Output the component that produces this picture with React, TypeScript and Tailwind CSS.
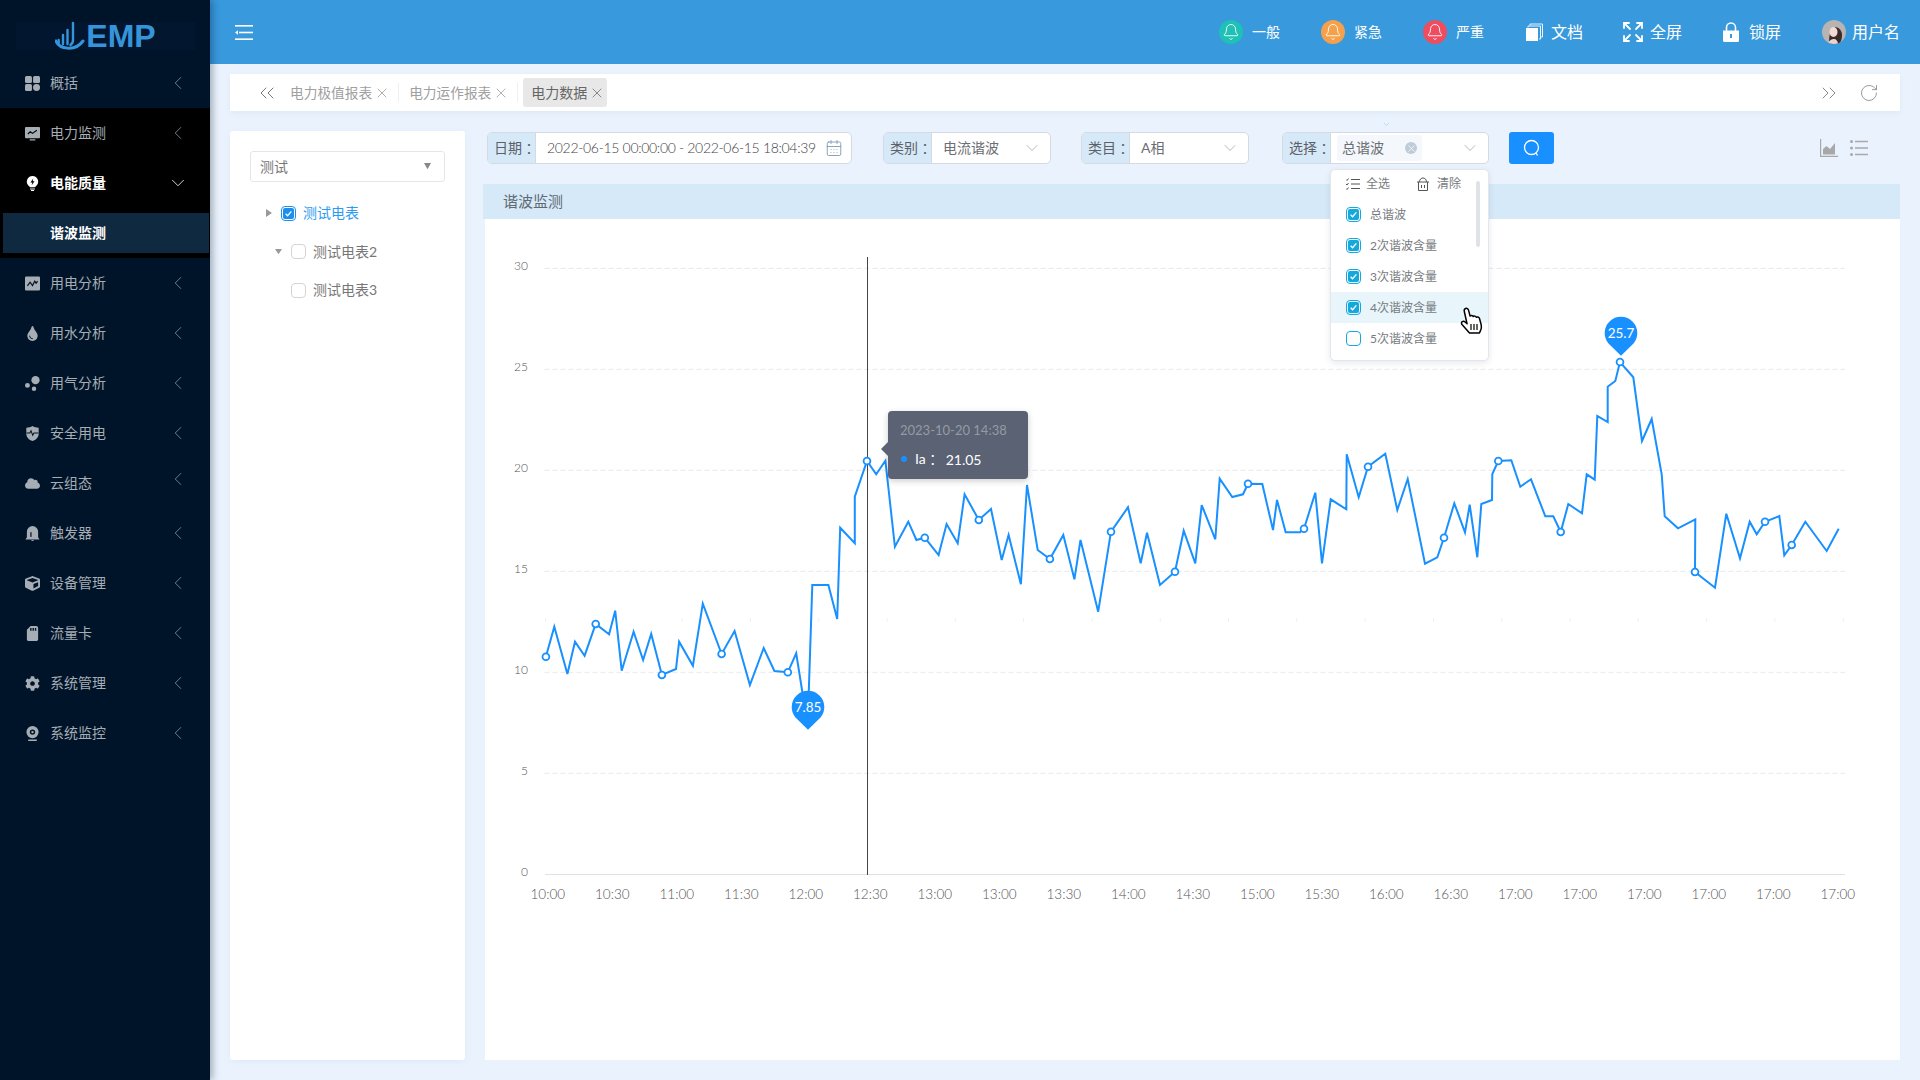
import { Bell, CalendarDays, ChevronDown, ChevronLeft, ChevronsLeft, ChevronsRight, Expand, RotateCw, X } from "lucide-react";
import { FaCloud, FaCog, FaCube, FaSdCard, FaTint } from "react-icons/fa";

const ICON_GRID = (
  <svg viewBox="0 0 16 16" className="size-[15px]" fill="currentColor">
    <rect x="0" y="0" width="7.4" height="7.4" rx="1.6" />
    <rect x="8.6" y="0" width="7.4" height="7.4" rx="1.6" />
    <rect x="0" y="8.6" width="7.4" height="7.4" rx="1.6" />
    <rect x="8.6" y="8.6" width="7.4" height="7.4" rx="3.7" />
  </svg>
);

const ICON_MONITOR = (
  <svg viewBox="0 0 16 16" className="size-[15px]" fill="currentColor">
    <path d="M1 1h14a1 1 0 0 1 1 1v10a1 1 0 0 1-1 1H1a1 1 0 0 1-1-1V2a1 1 0 0 1 1-1zM5 14.2h6V15.4H5z" />
    <path d="M3 8.5l2.6-2.4 2.4 1.8L12.6 4.6" fill="none" stroke="#000" strokeWidth="1.2" />
  </svg>
);

const ICON_BULB = (
  <svg viewBox="0 0 16 16" className="size-[15px]" fill="currentColor">
    <path d="M8 0a6 6 0 0 1 3.6 10.8c-.5.4-.7.8-.8 1.2H5.2c-.1-.4-.3-.8-.8-1.2A6 6 0 0 1 8 0zM5.4 13.2h5.2v1.1H5.4zM6.4 15h3.2v1H6.4z" />
    <path d="M8.8 2.6L5.8 6.9h2l-.7 3 3.1-4.3h-2z" fill="#000" />
  </svg>
);

const ICON_CHART = (
  <svg viewBox="0 0 16 16" className="size-[15px]" fill="currentColor">
    <rect x="0" y="0.5" width="16" height="15" rx="1.2" />
    <path d="M2.6 10.6l2.8-4 2.6 3.6 2.4-4.6 1.4 2 1.6-2" fill="none" stroke="#001429" strokeWidth="1.3" />
  </svg>
);

const ICON_BUBBLES = (
  <svg viewBox="0 0 16 16" className="size-[15px]" fill="currentColor">
    <circle cx="11.2" cy="4.4" r="4.4" />
    <circle cx="2.6" cy="10" r="2.6" />
    <circle cx="9.6" cy="13.6" r="2.4" />
  </svg>
);

const ICON_SHIELD = (
  <svg viewBox="0 0 16 16" className="size-[15px]" fill="currentColor">
    <path d="M8 0c1.8 1 4 1.6 6.6 1.8v6.4C14.6 12 11.8 14.8 8 16c-3.8-1.2-6.6-4-6.6-7.8V1.800C4 1.600 6.200 1 8 0z" />
    <path d="M1.600 7.400h3.600l1.200-2.400 1.800 4.800 1.400-2.400h4.800" fill="none" stroke="#001429" strokeWidth="1.1" />
  </svg>
);

const ICON_ALARM = (
  <svg viewBox="0 0 16 16" className="size-[15px]" fill="currentColor">
    <path d="M8 0a6 6 0 0 1 6 6v6l1.500 2.400H.5L2 12V6a6 6 0 0 1 6-6zM6.500 15h3c0 .6-.7 1-1.500 1s-1.500-.4-1.500-1z" />
    <rect x="5.700" y="6.600" width="1.300" height="5" fill="#001429" />
  </svg>
);

const ICON_CAM = (
  <svg viewBox="0 0 16 16" className="size-[15px]" fill="currentColor">
    <path
      fillRule="evenodd"
      d="M8 0a6.500 6.500 0 1 1 0 13A6.500 6.500 0 0 1 8 0zm0 3.600a2.900 2.900 0 1 0 0 5.800 2.900 2.900 0 0 0 0-5.800z"
    />
    <circle cx="8" cy="6.500" r="1.300" />
    <path d="M3.400 14.400h9.200V16H3.400z" />
  </svg>
);

const MENU = [
  { label: "概括", icon: ICON_GRID },
  { label: "电力监测", icon: ICON_MONITOR, dark: true },
  { label: "电能质量", icon: ICON_BULB, dark: true, open: true },
  { label: "用电分析", icon: ICON_CHART },
  { label: "用水分析", icon: <FaTint size={15} /> },
  { label: "用气分析", icon: ICON_BUBBLES },
  { label: "安全用电", icon: ICON_SHIELD },
  { label: "云组态", icon: <FaCloud size={15} />, arrow: "-translate-y-1" },
  { label: "触发器", icon: ICON_ALARM },
  { label: "设备管理", icon: <FaCube size={15} /> },
  { label: "流量卡", icon: <FaSdCard size={15} /> },
  { label: "系统管理", icon: <FaCog size={15} /> },
  { label: "系统监控", icon: ICON_CAM },
];

// traced from the reference, page coordinates; third value = ring marker
const LINE: [number, number, 1?][] = [
  [545.9, 656.7, 1], [554.3, 626.7], [567.4, 674], [575, 641.7], [584.6, 655.7], [595.7, 624, 1], [609.1, 634.3],
  [615.2, 610.7], [621.7, 670.7], [633.6, 631.7], [643.1, 660], [651.2, 634], [661.9, 675, 1], [676, 669],
  [679.1, 641.7], [692.9, 665.7], [702.8, 603.7], [721.6, 654, 1], [734.6, 631], [749.9, 685], [763.7, 648],
  [774.4, 671], [787.8, 672.3, 1], [796.2, 653.3], [802.3, 691.7], [808, 715], [812.3, 585], [828.4, 585],
  [837.2, 619], [840.2, 527.7], [854.8, 543.3], [854.8, 496.7], [867, 461, 1], [876.2, 474.3], [885.4, 460.7],
  [894.9, 546.7], [908.3, 521.7], [916.4, 540], [924.8, 537.7, 1], [938.6, 555], [946.6, 524], [957.7, 543.3],
  [964.6, 494.3], [978.8, 520, 1], [991, 509], [1001.7, 560], [1008.6, 535], [1020.9, 584.3], [1027, 485],
  [1037.7, 550], [1049.9, 559, 1], [1063.3, 535], [1074.4, 579.3], [1080.5, 540], [1098.2, 611.7], [1111, 531.7, 1],
  [1128, 507.3], [1140.7, 563.3], [1147, 532.7], [1160, 585], [1175, 571.7, 1], [1183.7, 530.7], [1195.3, 563.3],
  [1201.7, 505], [1215.3, 539.3], [1219.7, 478.7], [1232.3, 497], [1243, 494.3], [1248, 483.7, 1], [1262.3, 484],
  [1273, 530], [1277, 500], [1285.7, 532.3], [1300, 532.3], [1304, 528.7, 1], [1315.3, 492.7], [1322, 563.3],
  [1330.7, 499.3], [1346.3, 509.3], [1346.7, 454.3], [1358.7, 497.3], [1368, 466.7, 1], [1385.3, 453.7],
  [1397.3, 510], [1407.7, 479], [1425, 563.7], [1437.3, 557.3], [1444, 537.7, 1], [1454.3, 503.3], [1465, 532.3],
  [1469.7, 504.7], [1477.3, 557.3], [1481.3, 504], [1492, 500], [1492.3, 474], [1498.3, 461, 1], [1511.3, 460.3],
  [1520.3, 486.7], [1531, 479.3], [1545.3, 516.3], [1553.3, 516.3], [1560.7, 532, 1], [1568.3, 504], [1582, 513.3],
  [1586.7, 474.3], [1594.7, 479.7], [1597.3, 416], [1607.7, 422], [1607.7, 386.7], [1615.3, 381], [1620, 362, 1],
  [1633.3, 377.3], [1642, 441], [1651.7, 419], [1661.7, 474.3], [1664.7, 516.3], [1678, 528.3], [1695.3, 519.3],
  [1695, 572, 1], [1715, 587.7], [1726.3, 513.7], [1740, 558.3], [1749.7, 521.7], [1756.7, 534.3], [1765, 521.7, 1],
  [1779.3, 516], [1784.3, 555.3], [1791.7, 545, 1], [1805.3, 521.7], [1826.7, 551], [1838.7, 528.7],
];

const X_LABELS = [
  "10:00", "10:30", "11:00", "11:30", "12:00", "12:30", "13:00", "13:00", "13:30", "14:00", "14:30",
  "15:00", "15:30", "16:00", "16:30", "17:00", "17:00", "17:00", "17:00", "17:00", "17:00",
];

function Pin({ cx, top, text }: { cx: number; top: number; text: string }) {
  const cy = top + 16.3;
  return (
    <g>
      <path
        d={`M${cx} ${top + 39} L${cx - 12.5} ${cy + 10.5} A16.3 16.3 0 1 1 ${cx + 12.5} ${cy + 10.5} Z`}
        fill="#1890ff"
      />
      <text x={cx} y={cy + 4.5} textAnchor="middle" fontSize="13.5" fontWeight="400" fill="#fff">
        {text}
      </text>
    </g>
  );
}

function Chart() {
  return (
    <svg viewBox="485 219 1415 841" className="block h-[841px] w-[1415px] font-light">
      {[0, 5, 10, 15, 20, 25, 30].map((v) => {
        const y = 874.3 - v * 20.2;
        return (
          <g key={v}>
            {v > 0 && <line x1="544.4" x2="1845" y1={y} y2={y} stroke="#e8e8e8" strokeDasharray="5 3" />}
            <text x="528" y={y + 1.5} textAnchor="end" fontSize="12" fill="#555">
              {v}
            </text>
          </g>
        );
      })}
      {Array.from({ length: 20 }, (_, i) => (
        <line key={i} x1={545.5 + i * 68.3} x2={545.5 + i * 68.3} y1="618" y2="622" stroke="#f0f0f0" />
      ))}
      <line x1="545" x2="1845" y1="874.5" y2="874.5" stroke="#e2e2e2" />
      {X_LABELS.map((t, i) => (
        <text key={i} x={547.8 + i * 64.5} y="899" textAnchor="middle" fontSize="13.5" fill="#555">
          {t}
        </text>
      ))}
      <line x1="867.5" x2="867.5" y1="257" y2="875" stroke="#444" />
      <polyline
        points={LINE.map((p) => `${p[0]},${p[1]}`).join(" ")}
        fill="none"
        stroke="#1890ff"
        strokeWidth="2"
        strokeLinejoin="miter"
      />
      {LINE.filter((p) => p[2]).map((p) => (
        <circle key={p[0]} cx={p[0]} cy={p[1]} r="3.4" fill="#fff" stroke="#1890ff" strokeWidth="1.8" />
      ))}
      <Pin cx={808} top={690.7} text="7.85" />
      <Pin cx={1621} top={316.7} text="25.7" />
    </svg>
  );
}

function Colon() {
  return <span className="font-['Noto_Sans_CJK_TC']">：</span>;
}

function Field({ label, className, children }: { label: string; className: string; children: React.ReactNode }) {
  return (
    <div className={`flex h-8 overflow-hidden rounded-[5px] border border-[#d5dae0] bg-white ${className}`}>
      <div className="flex w-[48px] shrink-0 items-center border-r border-[#d5dae0] bg-[#d6e9f8] pl-[6px] whitespace-nowrap text-[#5d6066]">
        {label}
        <Colon />
      </div>
      {children}
    </div>
  );
}

function Check({ on, color }: { on?: boolean; color: "blue" | "cyan" }) {
  const border = color === "blue" ? "border-[#1b8fee]" : "border-[#14a9dc]";
  const fill = color === "blue" ? "bg-[#1b8fee]" : "bg-[#14a9dc]";
  return (
    <span className={`flex size-[15px] shrink-0 rounded-[4px] border p-px ${border}`}>
      {on && (
        <span className={`flex flex-1 items-center justify-center rounded-[2px] ${fill}`}>
          <svg viewBox="0 0 10 10" className="size-[9px]" fill="none" stroke="#fff" strokeWidth="1.5">
            <path d="M1.800 5.200l2.200 2.200 4.200-4.800" />
          </svg>
        </span>
      )}
    </span>
  );
}

function TopItem({ icon, label, className }: { icon: React.ReactNode; label: string; className?: string }) {
  return (
    <div className={`flex items-center text-white ${className ?? ""}`}>
      {icon}
      <span>{label}</span>
    </div>
  );
}

function AlarmBell({ color }: { color: string }) {
  return (
    <span className={`mr-[9px] flex size-6 items-center justify-center rounded-full ${color}`}>
      <Bell size={18} strokeWidth={1.2} />
    </span>
  );
}

function Tab({ label, active, first }: { label: string; active?: boolean; first?: boolean }) {
  return (
    <div
      className={
        active
          ? "ml-[5px] flex h-[29px] w-[84px] items-center rounded-[3px] bg-[#e8e8e8] pl-[8px] text-[#666]"
          : `flex items-center border-r border-[#efefef] pr-[8px] text-[13.7px] text-[#a0a0a0] ${first ? "" : "pl-[10px]"}`
      }
    >
      {label}
      <X size={16} strokeWidth={1} className={active ? "ml-[2px] text-[#555]" : "ml-[2px] text-[#888]"} />
    </div>
  );
}

export default function App() {
  return (
    <div className="flex h-screen w-full overflow-hidden bg-[#eaf3fd] font-[Lato,'Noto_Sans_CJK_SC',sans-serif] text-sm">
      <aside className="relative z-20 flex w-[210px] shrink-0 flex-col bg-[#001429] shadow-[3px_0_7px_rgba(0,21,41,0.3)]">
        <div className="flex h-[58px] shrink-0 justify-center pt-[22px]">
          <div className="flex h-[28px] w-[179px] items-center justify-center bg-[#02172f] pl-px">
            <svg viewBox="0 0 30 30" className="mr-px size-[30px]" fill="none" stroke="#3694da">
              <path d="M3.700 23v-4M8 23v-9M12.500 23V9" strokeWidth="2.400" strokeLinecap="round" />
              <path d="M18 2v17c0 2-1 4-2.500 5" strokeWidth="2.400" strokeLinecap="round" />
              <path d="M1 20c3 8 19 11 27 0" strokeWidth="3" strokeLinecap="round" />
            </svg>
            <span className="font-['Liberation_Sans'] text-[32px] leading-none font-bold text-[#3694da]">EMP</span>
          </div>
        </div>
        {MENU.map((m) => (
          <div key={m.label} className={m.dark ? "bg-black" : ""}>
            <div
              className={`flex h-[50px] items-center pr-[21px] pl-[25px] ${
                m.open ? "font-semibold text-white" : "text-[#a6adb4]"
              }`}
            >
              <span className="mr-[10px] flex w-[15px] justify-center">{m.icon}</span>
              <span className="flex-1">{m.label}</span>
              {m.open ? (
                <ChevronDown size={22} strokeWidth={1} className="text-[#e6e6e6]" />
              ) : (
                <ChevronLeft size={22} strokeWidth={1} className={`text-[#7b8794] ${m.arrow ?? ""}`} />
              )}
            </div>
            {m.open && (
              <div className="py-[5px] pl-[3px]">
                <div className="flex h-[40px] w-[206px] items-center bg-[#0f2a40] pl-[47px] font-semibold text-white">
                  谐波监测
                </div>
              </div>
            )}
          </div>
        ))}
      </aside>

      <main className="flex min-w-0 flex-1 flex-col">
        <header className="flex h-16 shrink-0 items-center bg-[#3899dd] pr-5 pl-[25px]">
          <svg viewBox="0 0 18 15" className="h-[15px] w-[18px]" fill="#fff">
            <rect width="18" height="1.600" />
            <rect x="4" y="6.700" width="14" height="1.600" />
            <rect y="13.400" width="18" height="1.600" />
            <path d="M0 7.500l3-2.200v4.400z" />
          </svg>
          <div className="ml-auto flex items-center">
            <TopItem icon={<AlarmBell color="bg-[#1fc0b5]" />} label="一般" />
            <TopItem className="ml-[41px]" icon={<AlarmBell color="bg-[#f5a14b]" />} label="紧急" />
            <TopItem className="ml-[41px]" icon={<AlarmBell color="bg-[#ee4d5f]" />} label="严重" />
            <TopItem
              className="ml-[41px] text-base"
              icon={
                <svg viewBox="0 0 18 18" className="mr-2 size-[18px]" fill="none" stroke="#fff">
                  <path d="M5 2.500V1h12.500v13H16" strokeWidth="0.900" />
                  <path d="M3 4.500V3h12.500v13H14" strokeWidth="0.900" />
                  <path d="M1 5h12v13H1z" fill="#fff" stroke="none" />
                </svg>
              }
              label="文档"
            />
            <TopItem
              className="ml-[38px] text-base"
              icon={<Expand size={24} strokeWidth={1.8} className="mr-[5px]" />}
              label="全屏"
            />
            <TopItem
              className="ml-[40px] text-base"
              icon={
                <svg viewBox="0 0 18 20" className="mr-[9px] h-5 w-[18px]" fill="#fff">
                  <path d="M4.500 9V5.500a4.500 4.500 0 0 1 9 0V9" fill="none" stroke="#fff" strokeWidth="1.600" />
                  <path fillRule="evenodd" d="M1 8.500h16v10a1.500 1.500 0 0 1-1.500 1.500h-13A1.500 1.500 0 0 1 1 18.500zM8 12v4h2v-4z" />
                </svg>
              }
              label="锁屏"
            />
            <TopItem
              className="ml-[41px] text-base"
              icon={
                <svg viewBox="0 0 24 24" className="mr-[6px] size-6 rounded-full">
                  <rect width="24" height="24" fill="#b9b3b2" />
                  <path d="M7 24c0-8 1-16 6-17 4 0 7 4 7 8s-1 7-3 9z" fill="#3a2a2a" />
                  <ellipse cx="11.500" cy="12" rx="4" ry="5" fill="#efdcd4" />
                  <path d="M6 24c1-4 4-5 6-5s4 2 4 5z" fill="#e8d5cf" />
                </svg>
              }
              label="用户名"
            />
          </div>
        </header>

        <div className="flex min-h-0 flex-1 flex-col px-5 pt-2.5 pb-5">
          <nav className="flex h-[37px] shrink-0 items-center bg-white pr-[21px] pl-[25px] text-[#999] shadow-[0_2px_6px_rgba(0,60,120,0.06)]">
            <ChevronsLeft size={24} strokeWidth={1} className="mr-[11px] text-[#777]" />
            <Tab label="电力极值报表" first />
            <Tab label="电力运作报表" />
            <Tab label="电力数据" active />
            <ChevronsRight size={24} strokeWidth={1} className="mr-[18px] ml-auto text-[#888]" />
            <RotateCw size={20} strokeWidth={1} className="text-[#888]" />
          </nav>

          <div className="mt-5 flex min-h-0 flex-1 gap-5">
            <section className="w-[235px] shrink-0 rounded-[3px] bg-white px-5 pt-5 text-[#777] shadow-[0_2px_8px_rgba(0,60,120,0.05)]">
              <div className="flex h-[31px] items-center justify-between rounded-[3px] border border-[#e6e6e6] pr-[13px] pl-[9px]">
                测试
                <svg viewBox="0 0 8 7" className="w-[7px]" fill="#888"><path d="M0 0h8L4 7z" /></svg>
              </div>
              <div className="mt-3">
                <div className="flex h-[38px] items-center pl-[16px] text-[#2d9bf0]">
                  <svg viewBox="0 0 6 8" className="mr-[9px] w-[6px]" fill="#999"><path d="M0 0l6 4-6 4z" /></svg>
                  <Check on color="blue" />
                  <span className="ml-[7px]">测试电表</span>
                </div>
                <div className="flex h-[39px] items-center pl-[25px]">
                  <svg viewBox="0 0 8 6" className="mr-[9px] w-[7px]" fill="#999"><path d="M0 0h8L4 6z" /></svg>
                  <span className="size-[15px] rounded-[4px] border border-[#d4d4d4]" />
                  <span className="ml-[7px]">测试电表2</span>
                </div>
                <div className="flex h-[38px] items-center pl-[41px]">
                  <span className="size-[15px] rounded-[4px] border border-[#d4d4d4]" />
                  <span className="ml-[7px]">测试电表3</span>
                </div>
              </div>
            </section>

            <section className="flex min-w-0 flex-1 flex-col">
              <div className="relative z-10 mt-px flex h-[32px] shrink-0 items-center pl-[2px] text-[#6b6e73]">
                <Field label="日期" className="w-[365px]">
                  <div className="flex flex-1 items-center justify-between pr-[8px] pl-[11px] font-light tracking-[-0.32px] whitespace-nowrap text-[#3f4246]">
                    2022-06-15 00:00:00 - 2022-06-15 18:04:39
                    <CalendarDays size={18} strokeWidth={1.2} className="text-[#7f9ab3]" />
                  </div>
                </Field>
                <Field label="类别" className="ml-[31px] w-[168px]">
                  <div className="flex flex-1 items-center justify-between pr-[8px] pl-[11px]">
                    电流谐波
                    <ChevronDown size={20} strokeWidth={1} className="text-[#aaa]" />
                  </div>
                </Field>
                <Field label="类目" className="ml-[30px] w-[168px]">
                  <div className="flex flex-1 items-center justify-between pr-[8px] pl-[11px]">
                    A相
                    <ChevronDown size={20} strokeWidth={1} className="text-[#aaa]" />
                  </div>
                </Field>
                <div className="relative ml-[33px] w-[207px]">
                  <svg viewBox="0 0 6 4" className="absolute -top-[9px] left-[102px] w-[5px]" fill="none" stroke="#b8d4ee"><path d="M0 0l3 3 3-3" /></svg>
                  <Field label="选择" className="w-full">
                    <div className="flex flex-1 items-center justify-between pr-[8px] pl-[6px]">
                      <span className="flex h-[26px] w-[85px] items-center rounded-[3px] bg-[#f4f7fb] pl-[5px]">
                        总谐波
                        <span className="mr-[5px] ml-auto flex size-[12px] items-center justify-center rounded-full bg-[#c0cbd8]">
                          <X size={11} strokeWidth={1.6} className="text-white" />
                        </span>
                      </span>
                      <ChevronDown size={20} strokeWidth={1} className="text-[#aaa]" />
                    </div>
                  </Field>
                  <div className="absolute top-[37px] left-[48px] h-[192px] w-[159px] rounded-[5px] border border-[#e3e6ea] bg-white text-xs text-[#777b80] shadow-[0_2px_6px_rgba(0,30,80,0.1)]">
                    <div className="flex h-[28px] items-center pl-[15px]">
                      <svg viewBox="0 0 14 12" className="mr-[6px] w-[14px]" fill="none" stroke="#555" strokeWidth="1">
                        <path d="M0 1.500l1 1 1.500-2M0 6l1 1 1.500-2M0 10.500l1 1 1.500-2M5 1.500h9M5 6h9M5 10.500h9" />
                      </svg>
                      全选
                      <svg viewBox="0 0 14 14" className="mr-[7px] ml-[26px] w-[14px]" fill="none" stroke="#555" strokeWidth="1">
                        <path d="M1 5h12M2.500 5v8.500h9V5M3.500 5c0-3 2-4 3.500-4s3.500 1 3.500 4M5.500 8v3M8.500 8v3" />
                      </svg>
                      清除
                    </div>
                    <div className="absolute top-[11px] right-[8px] h-[66px] w-[4px] rounded-full bg-[#dfe3e8]" />
                    <div className="pt-px">
                      {["总谐波", "2次谐波含量", "3次谐波含量", "4次谐波含量", "5次谐波含量"].map((t, i) => (
                        <div key={t} className={`flex h-[31px] items-center pl-[15px] ${i === 3 ? "bg-[#e8f6fc]" : ""}`}>
                          <Check on={i < 4} color="cyan" />
                          <span className="ml-[9px]">{t}</span>
                        </div>
                      ))}
                    </div>
                    <svg viewBox="0 0 25 27" className="absolute top-[137px] left-[129px] h-[27px] w-[25px]" fill="#fff" stroke="#000" strokeWidth="1.500" strokeLinejoin="round">
                      <path d="M5.500 1.500c1.300-.6 2.600.2 3 1.600l1.600 6c.8-1 2.600-.8 3.100.5.800-.9 2.600-.6 3.100.7.900-.7 2.600-.3 3.100 1l1.800 6.500c.5 2.200.2 4.300-.8 6.100l-1 2H9.500L2 17.500c-.8-1-.6-2.300.3-2.900s2-.3 2.800.4l2 1.800L4.400 5c-.4-1.500-.1-3 1.100-3.500z" />
                      <path d="M11 17v6M14 17v6M17 17v6" fill="none" strokeWidth="1.200" />
                    </svg>
                  </div>
                </div>
                <button className="ml-[20px] flex h-[32px] w-[45px] items-center justify-center rounded-[3px] bg-[#1890ff]">
                  <svg viewBox="0 0 18 18" className="size-[18px]" fill="none" stroke="#fff" strokeWidth="1.300">
                    <circle cx="8.500" cy="8.500" r="7" />
                    <path d="M13 14l1.500 2.500" />
                  </svg>
                </button>
                <div className="mr-[32px] ml-auto flex items-center gap-[12px]">
                  <svg viewBox="0 0 18 18" className="size-[18px]" fill="#a8a8a8">
                    <path d="M0 0h1.200v16.800H18V18H0z" />
                    <path d="M3 15.500V10l3.500-3 3.500 3 5-6v11.500z" />
                  </svg>
                  <svg viewBox="0 0 18 18" className="size-[18px]" fill="#a8a8a8">
                    <circle cx="1.500" cy="2.500" r="1.500" />
                    <circle cx="1.500" cy="9" r="1.500" />
                    <circle cx="1.500" cy="15.500" r="1.500" />
                    <path d="M5 1.800h13v1.400H5zM5 8.300h13v1.400H5zM5 14.800h13v1.400H5z" />
                  </svg>
                </div>
              </div>

              <div className="mt-5 -ml-[2px] flex h-[35px] shrink-0 items-center bg-[#d6e9f8] pl-[20px] text-[15px] text-[#5f6a75]">
                谐波监测
              </div>
              <div className="relative min-h-0 flex-1 bg-white">
                <Chart />
                <div className="absolute top-[192px] left-[403px] h-[68px] w-[140px] rounded-[4px] bg-[#5a6273] px-[12px] shadow-[0_2px_6px_rgba(0,0,0,0.2)]">
                  <span className="absolute top-[30px] -left-[7px] size-0 border-y-[8px] border-r-[8px] border-y-transparent border-r-[#5a6273]" />
                  <div className="mt-[10px] text-[13px] text-[#969aa5]">2023-10-20 14:38</div>
                  <div className="mt-[9px] flex items-center text-white">
                    <span className="mr-[8px] ml-[1px] size-[6px] rounded-full bg-[#1890ff]" />
                    Ia
                    <Colon />
                    <span className="ml-[6px] translate-y-px">21.05</span>
                  </div>
                </div>
              </div>
            </section>
          </div>
        </div>
      </main>
    </div>
  );
}
